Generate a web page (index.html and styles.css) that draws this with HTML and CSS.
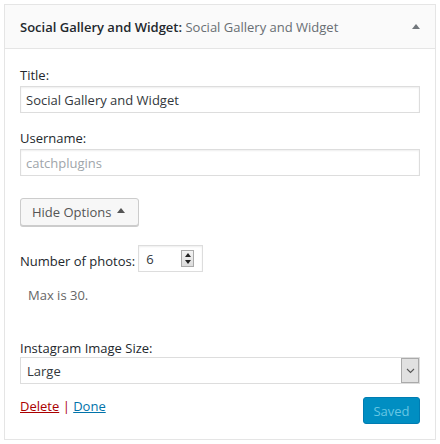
FILE: index.html
```html
<!DOCTYPE html>
<html>
<head>
<meta charset="utf-8">
<link rel="stylesheet" href="styles.css">
</head>
<body>
<div class="widget">
  <div class="widget-top">
    <h3 class="widget-title"><span class="name">Social Gallery and Widget:</span> <span class="in-title">Social Gallery and Widget</span></h3>
    <span class="toggle"></span>
  </div>
  <div class="widget-inside">
    <p class="field first">
      <label>Title:</label>
      <input class="text" type="text" value="Social Gallery and Widget">
    </p>
    <p class="field second">
      <label>Username:</label>
      <input class="text muted" type="text" value="catchplugins">
    </p>
    <p class="btn-row">
      <button class="button">Hide Options <span class="up"></span></button>
    </p>
    <p class="num-row">
      <label>Number of photos:</label>
      <span class="number"><span class="val">6</span><span class="spin"><span class="sup"></span><span class="sdown"></span></span></span>
    </p>
    <p class="desc">Max is 30.</p>
    <p class="field sel-field">
      <label>Instagram Image Size:</label>
      <span class="select"><span class="sval">Large</span><span class="sarrow"><svg width="9" height="6" viewBox="0 0 9 6"><path d="M1 1 L4.5 4.5 L8 1" fill="none" stroke="#555" stroke-width="1.1"/></svg></span></span>
    </p>
    <div class="controls">
      <div class="links"><a class="del">Delete</a> <span class="sep">|</span> <a class="done">Done</a></div>
      <button class="primary">Saved</button>
    </div>
  </div>
</div>
</body>
</html>
```
FILE: styles.css
```css
* { box-sizing: border-box; }
body {
  margin: 0;
  padding: 4px 4px 0 4px;
  background: #fff;
  font-family: "Open Sans", "Noto Sans", sans-serif;
  font-size: 13px;
  color: #23282d;
}
.widget {
  width: 432px;
  border: 1px solid #e5e5e5;
  background: #fff;
}
.widget-top {
  height: 44px;
  background: #fafafa;
  border-bottom: 1px solid #e5e5e5;
  display: flex;
  align-items: center;
  justify-content: space-between;
  padding: 0 15px;
}
.widget-title {
  margin: 0;
  font-size: 13px;
  font-weight: 600;
  color: #23282d;
}
.in-title {
  font-weight: 400;
  color: #686e73;
}
.toggle {
  width: 0; height: 0;
  border-left: 4px solid transparent;
  border-right: 4px solid transparent;
  border-bottom: 5px solid #72777c;
  margin-right: 0;
}
.widget-inside {
  padding: 0 15px 15px;
}
.field { margin: 0; display: flex; flex-direction: column; }
.field label { line-height: 18px; }
.field.first { margin-top: 17px; }
.field.second { margin-top: 16px; }
.text {
  margin-top: 2px;
  width: 400px;
  height: 27px;
  border: 1px solid #ddd;
  box-shadow: inset 0 1px 2px rgba(0,0,0,.07);
  font-family: inherit;
  font-size: 13px;
  color: #32373c;
  padding: 0 5px;
  outline: none;
}
.text.muted { color: #a0a5aa; }
.btn-row { margin: 22px 0 0; height: 28px; }
.button {
  height: 28px;
  padding: 0 13px 0 11px;
  background: #f7f7f7;
  border: 1px solid #ccc;
  border-radius: 3px;
  box-shadow: 0 1px 0 #ccc;
  font-family: inherit;
  font-size: 13px;
  color: #555;
  display: inline-flex;
  align-items: center;
  gap: 6px;
}
.up {
  width: 0; height: 0;
  border-left: 4px solid transparent;
  border-right: 4px solid transparent;
  border-bottom: 5px solid #555;
  margin-bottom: 3px;
}
.num-row {
  margin: 19px 0 0;
  display: flex;
  align-items: center;
  gap: 3px;
}
.num-row label { position: relative; top: 2px; }
.number {
  width: 65px;
  height: 27px;
  border: 1px solid #ddd;
  box-shadow: inset 0 1px 2px rgba(0,0,0,.07);
  display: flex;
  align-items: center;
  justify-content: space-between;
  padding: 0 8px 0 7px;
  color: #32373c;
}
.spin {
  width: 13px; height: 17px;
  border: 1px solid #aaa;
  background: linear-gradient(#f4f4f4, #dcdcdc);
  display: flex; flex-direction: column; align-items: center; justify-content: space-around;
  padding: 1px 0;
}
.sup, .sdown { width: 0; height: 0; border-left: 3px solid transparent; border-right: 3px solid transparent; }
.sup { border-bottom: 4px solid #222; }
.sdown { border-top: 4px solid #222; }
.desc {
  margin: 14px 0 0;
  line-height: 18px;
  padding-left: 8px;
  color: #666;
}
.field.sel-field { margin-top: 35px; }
.select {
  height: 27px;
  width: 400px;
  border: 1px solid #ddd;
  display: flex;
  align-items: center;
  justify-content: space-between;
  padding-left: 6px;
  color: #32373c;
}
.sarrow {
  width: 18px; height: 25px;
  background: #e1e1e1;
  border: 1px solid #aaa;
  display: flex; align-items: center; justify-content: center;
}
.controls {
  margin-top: 13px;
  display: flex;
  justify-content: space-between;
  align-items: flex-start;
}
.links { padding-top: 0; line-height: 18px; }
.del { color: #a00; text-decoration: underline; }
.done { color: #0073aa; text-decoration: underline; }
.sep { color: #a00; }
.primary {
  height: 27px;
  width: 57px;
  background: #008ec2;
  border: 1px solid #007cb2;
  border-radius: 3px;
  color: #66c6e4;
  font-family: inherit;
  font-size: 13px;
}
```
